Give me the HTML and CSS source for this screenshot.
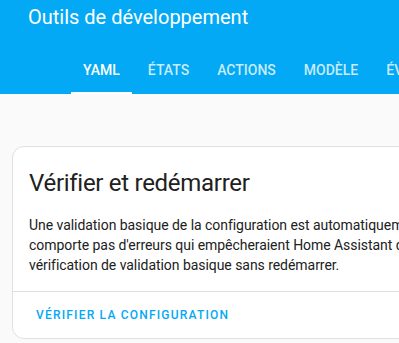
FILE: index.html
```html
<!DOCTYPE html>
<html lang="fr">
<head>
    <meta charset="UTF-8">
    <meta name="viewport" content="width=device-width, initial-scale=1.0">
    <title>Outils de développement</title>
    <link rel="stylesheet" href="styles.css">
</head>
<body>

<header class="toolbar">
    <div class="toolbar-title">Outils de développement</div>
    <nav class="tabs">
        <a class="tab active">YAML</a>
        <a class="tab">États</a>
        <a class="tab">Actions</a>
        <a class="tab">Modèle</a>
        <a class="tab">Événements</a>
    </nav>
</header>

<main class="content">
    <div class="card">
        <h1 class="card-header">Vérifier et redémarrer</h1>
        <div class="card-content">
            <p>Une validation basique de la configuration est automatiquement effectuée, mais assurez-vous que votre configuration ne<br>
            comporte pas d'erreurs qui empêcheraient Home Assistant de démarrer. Vous pouvez lancer une<br>
            vérification de validation basique sans redémarrer.</p>
        </div>
        <div class="card-actions">
            <button class="text-button">Vérifier la configuration</button>
        </div>
    </div>
</main>

</body>
</html>
```

FILE: styles.css
```css
body {
    margin: 0;
    background-color: #fafafa;
    font-family: Roboto, "Noto Sans", sans-serif;
    color: #212121;
    overflow: hidden;
}

.toolbar {
    background-color: #03a9f4;
    color: #ffffff;
}

.toolbar-title {
    padding: 7px 0 19px 28px;
    font-size: 20px;
    line-height: 20px;
    font-weight: 400;
}

.tabs {
    display: flex;
    height: 48px;
    padding-left: 69px;
    white-space: nowrap;
}

.tab {
    margin: 0 2px;
    padding: 0 12px;
    line-height: 48px;
    font-size: 14px;
    font-weight: 500;
    text-transform: uppercase;
    color: rgba(255, 255, 255, 0.78);
    box-sizing: border-box;
}

.tab.active {
    color: #ffffff;
    border-bottom: 2px solid #ffffff;
}

.content {
    padding: 52px 0 0 12px;
}

.card {
    width: 700px;
    background-color: #ffffff;
    border: 1px solid #e0e0e0;
    border-radius: 12px;
}

.card-header {
    margin: 0;
    padding: 20px 16px 0;
    font-size: 24px;
    line-height: 32px;
    font-weight: 400;
    letter-spacing: -0.012em;
}

.card-content {
    padding: 16px 16px 16px;
}

.card-content p {
    margin: 0;
    font-size: 14px;
    line-height: 20px;
    letter-spacing: -0.05px;
    white-space: nowrap;
}

.card-actions {
    border-top: 1px solid #e0e0e0;
    padding: 5px 16px;
}

.text-button {
    height: 36px;
    padding: 0 7px;
    border: none;
    background: none;
    font-family: inherit;
    font-size: 12px;
    font-weight: 500;
    letter-spacing: 1.2px;
    text-transform: uppercase;
    color: #03a9f4;
}
```
